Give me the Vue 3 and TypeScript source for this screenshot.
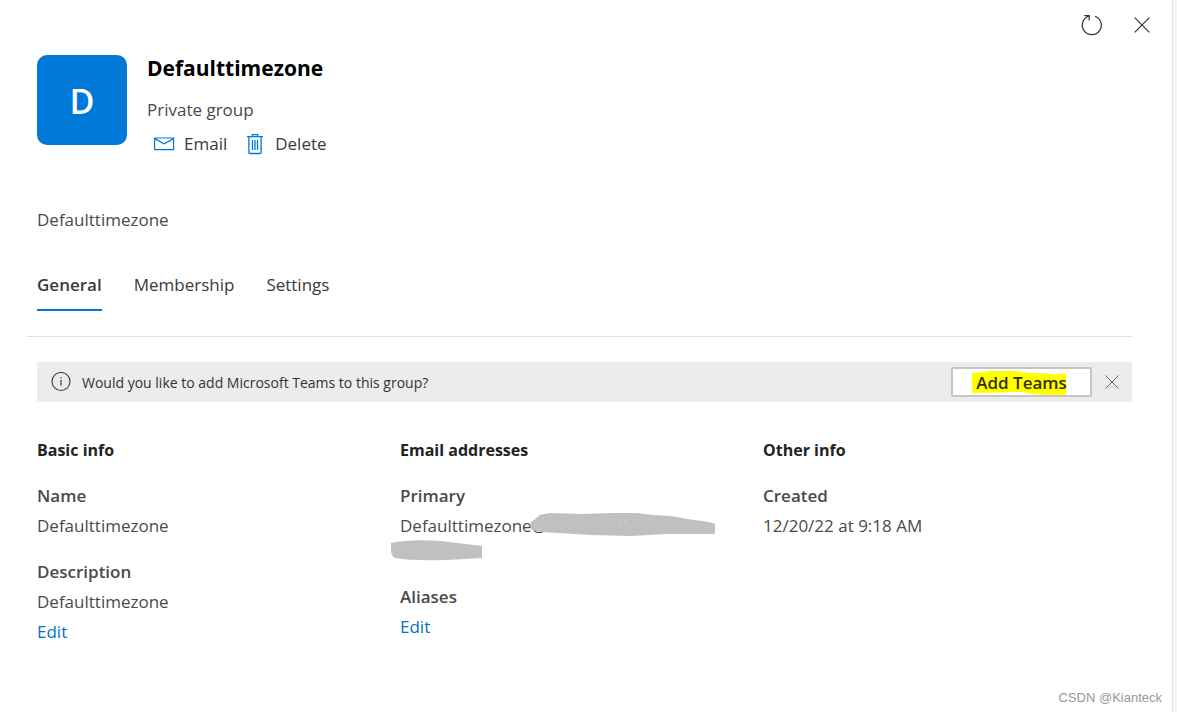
<script setup lang="ts">
import { ref } from 'vue'

const tabs: string[] = ['General', 'Membership', 'Settings']
const activeTab = ref<string>('General')
</script>

<template>
  <main class="panel">
    <div class="top-actions">
      <button class="icon-button" type="button" aria-label="Refresh">
        <svg width="24" height="24" viewBox="0 0 24 24" fill="none" stroke="#333" stroke-width="1.2">
          <path d="M15 3.2A9.5 9.5 0 1 1 8.6 3.2M4.2 2.6h5v4.8" />
        </svg>
      </button>
      <button class="icon-button" type="button" aria-label="Close">
        <svg width="24" height="24" viewBox="0 0 24 24" fill="none" stroke="#333" stroke-width="1.2">
          <path d="M4.7 4.7l14.6 14.6M19.3 4.7L4.7 19.3" />
        </svg>
      </button>
    </div>

    <header class="group-header">
      <div class="avatar">D</div>
      <div class="identity">
        <h1>Defaulttimezone</h1>
        <p class="group-type">Private group</p>
        <div class="commands">
          <button class="command" type="button">
            <svg width="22" height="22" viewBox="0 0 22 22" fill="none" stroke="#0078d4" stroke-width="1.2">
              <path d="M1.6 5h19v11.6h-19zM1.6 5.6l9.5 5.2 9.5-5.2" />
            </svg>
            Email
          </button>
          <button class="command" type="button">
            <svg width="22" height="22" viewBox="0 0 22 22" fill="none" stroke="#0078d4" stroke-width="1.3">
              <path d="M3 3.6h16M8.4 3.4V1.6h5.2v1.8M4.9 3.6v16q0 .9.9.9h10.4q.9 0 .9-.9v-16M8.5 7v10M11 7v10M13.5 7v10" />
            </svg>
            Delete
          </button>
        </div>
      </div>
    </header>

    <p class="summary">Defaulttimezone</p>

    <nav class="tabs" role="tablist">
      <button
        v-for="tab in tabs"
        :key="tab"
        class="tab"
        :class="{ active: tab === activeTab }"
        type="button"
        role="tab"
        :aria-selected="tab === activeTab"
        @click="activeTab = tab"
      >
        {{ tab }}
      </button>
    </nav>

    <section class="notice">
      <svg class="info-icon" width="20" height="20" viewBox="0 0 20 20" fill="none" stroke="#444" stroke-width="1.2">
        <circle cx="10" cy="9.5" r="9" />
        <path d="M10 7.7v6M10 4.9v1.4" />
      </svg>
      <span class="notice-text">Would you like to add Microsoft Teams to this group?</span>
      <button class="add-teams" type="button">
        <svg class="marker" width="94" height="24" viewBox="0 0 94 24">
          <path d="M0 2L12 1 16 0H42L58 2 77 2.5 84 4 86 2.5H94V24H76L60 23 50 21 28 21.5 10 22 0 22Z" fill="#ff0" />
        </svg>
        <span class="add-label">Add Teams</span>
      </button>
      <button class="icon-button dismiss" type="button" aria-label="Dismiss">
        <svg width="16" height="16" viewBox="0 0 16 16" fill="none" stroke="#666" stroke-width="1">
          <path d="M1.5 1.5l13 13M14.5 1.5l-13 13" />
        </svg>
      </button>
    </section>

    <div class="details">
      <section>
        <h2>Basic info</h2>
        <h3>Name</h3>
        <p>Defaulttimezone</p>
        <h3 class="next">Description</h3>
        <p>Defaulttimezone</p>
        <a href="#description">Edit</a>
      </section>
      <section>
        <h2>Email addresses</h2>
        <h3>Primary</h3>
        <div class="address">
          <p>Defaulttimezone@</p>
          <svg class="redaction" width="326" height="50" viewBox="0 0 326 50" fill="#c0c0c0">
            <path d="M138 12L149 3 153 2 160 1 190 2 222 1 246 1 262 3 280 4 296 7 318 10 324 12V22L276 22 240 24 200 23 150 20 141 18Z" />
            <path d="M0 31Q20 27 50 29L91 34V46L56 48Q20 49 4 46Q0 44 0 38Z" />
            <path d="M227 10h3M233 10h3" stroke="#d4d4d4" />
          </svg>
        </div>
        <h3 class="next">Aliases</h3>
        <a href="#aliases">Edit</a>
      </section>
      <section>
        <h2>Other info</h2>
        <h3>Created</h3>
        <p>12/20/22 at 9:18 AM</p>
      </section>
    </div>

    <footer class="credit">CSDN @Kianteck</footer>
  </main>
</template>

<style>
body {
  margin: 0;
  background: #f5f5f5;
}
</style>

<style scoped>
.panel {
  box-sizing: border-box;
  display: flex;
  flex-direction: column;
  min-height: 100vh;
  margin-right: 4px;
  padding: 13px 40px 4px 37px;
  border-right: 1px solid #e3e3e3;
  background: #fff;
  color: #4a4a4a;
  font-family: "Open Sans", "Noto Sans", sans-serif;
  font-size: 17px;
  line-height: 30px;
}

h1,
h2,
h3,
p {
  margin: 0;
}

button {
  padding: 0;
  border: 0;
  background: none;
  color: #3a3a3a;
  font: inherit;
  cursor: pointer;
}

.icon-button {
  display: flex;
}

.top-actions {
  display: flex;
  justify-content: flex-end;
  gap: 26px;
  margin-right: -22px;
}

.group-header {
  display: flex;
  gap: 20px;
  margin-top: 18px;
}

.avatar {
  display: flex;
  align-items: center;
  justify-content: center;
  box-sizing: border-box;
  width: 90px;
  height: 90px;
  padding-top: 2px;
  border-radius: 10px;
  background: #0078d7;
  color: #fff;
  font-size: 34px;
  font-weight: 600;
}

h1 {
  color: #000;
  font-size: 21px;
  font-weight: 700;
  line-height: 26px;
}

.group-type {
  margin-top: 14px;
}

.commands {
  display: flex;
  gap: 17px;
  margin-top: 4px;
  padding-left: 6px;
}

.command {
  display: flex;
  align-items: center;
  gap: 9px;
}

.summary {
  margin-top: 46px;
}

.tabs {
  display: flex;
  gap: 32px;
  margin-top: 35px;
  margin-left: -10px;
  padding: 0 0 25px 10px;
  border-bottom: 1px solid #ddd;
}

.tab {
  height: 41px;
  padding-bottom: 9px;
  border-bottom: 2px solid transparent;
}

.tab.active {
  border-color: #0078d4;
  font-weight: 600;
}

.notice {
  display: flex;
  align-items: center;
  box-sizing: border-box;
  height: 40px;
  margin-top: 25px;
  padding: 0 12px 0 14px;
  background: #ececec;
  color: #333;
  font-size: 14px;
}

.notice-text {
  flex: 1;
  margin-left: 11px;
  padding-top: 2px;
}

.add-teams {
  position: relative;
  box-sizing: border-box;
  width: 141px;
  height: 30px;
  border: 2px solid #c6c6c6;
  border-radius: 2px;
  background: #fff;
  color: #332f00;
  font-size: 17px;
  font-weight: 600;
  line-height: 28px;
}

.marker {
  position: absolute;
  top: 2px;
  left: 19px;
}

.add-label {
  position: relative;
}

.dismiss {
  margin-left: 12px;
}

.details {
  display: grid;
  grid-template-columns: repeat(3, 1fr);
  margin-top: 33px;
  margin-right: 6px;
}

h2 {
  margin-bottom: 16px;
  color: #222;
  font-size: 16px;
  font-weight: 700;
}

h3 {
  font-size: 17px;
  font-weight: 600;
}

.next {
  margin-top: 16px;
}

.address {
  position: relative;
  height: 55px;
}

.redaction {
  position: absolute;
  top: 1px;
  left: -9px;
}

a {
  color: #0072c6;
  text-decoration: none;
}

.credit {
  margin-top: auto;
  margin-right: -30px;
  color: #999;
  font-family: "Liberation Sans", Arial, sans-serif;
  font-size: 13px;
  line-height: 20px;
  text-align: right;
}
</style>
